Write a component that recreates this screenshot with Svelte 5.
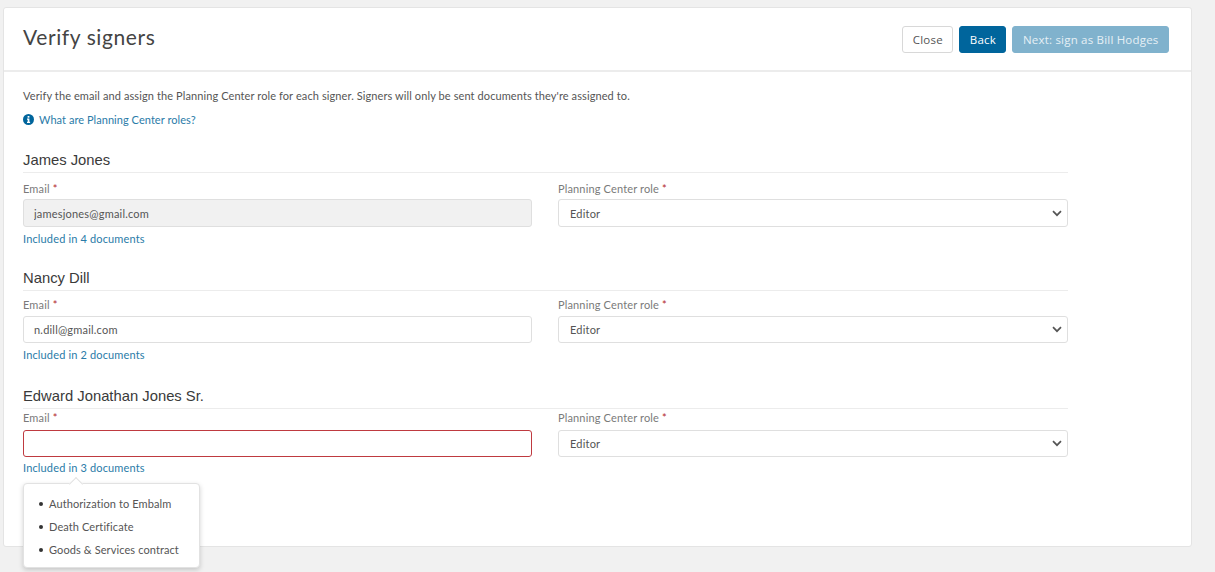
<script>
  const signers = [
    { name: 'James Jones', email: 'jamesjones@gmail.com', docs: 4, state: 'readonly' },
    { name: 'Nancy Dill', email: 'n.dill@gmail.com', docs: 2, state: 'ok' },
    { name: 'Edward Jonathan Jones Sr.', email: '', docs: 3, state: 'error', open: true }
  ];
  const openDocs = ['Authorization to Embalm', 'Death Certificate', 'Goods & Services contract'];
</script>

<div class="page">
  <div class="card">
    <header class="header">
      <h1>Verify signers</h1>
      <div class="actions">
        <button class="btn">Close</button>
        <button class="btn primary">Back</button>
        <button class="btn primary disabled">Next: sign as Bill Hodges</button>
      </div>
    </header>

    <div class="body">
      <p class="intro">Verify the email and assign the Planning Center role for each signer. Signers will only be sent documents they're assigned to.</p>
      <a class="help" href="#roles">
        <svg width="11" height="11" viewBox="0 0 11 11">
          <circle cx="5.5" cy="5.5" r="5.5" fill="#00659c" />
          <rect x="4.6" y="2" width="1.8" height="1.7" fill="#fff" />
          <path d="M4 4.6h2.4v3.2h.7v1.1H4V7.8h.7V5.7H4z" fill="#fff" />
        </svg>
        What are Planning Center roles?
      </a>

      {#each signers as s}
        <section class="signer {s.state}">
          <h2>{s.name}</h2>
          <div class="fields">
            <div class="field">
              <span class="label">Email <i>*</i></span>
              <input class="control" class:locked={s.state === 'readonly'} class:invalid={s.state === 'error'} value={s.email} readonly={s.state === 'readonly'} />
              <div class="docs">
                <a href="#docs">Included in {s.docs} documents</a>
                {#if s.open}
                  <div class="popover">
                    <ul>
                      {#each openDocs as d}
                        <li>{d}</li>
                      {/each}
                    </ul>
                  </div>
                {/if}
              </div>
            </div>
            <div class="field">
              <span class="label">Planning Center role <i>*</i></span>
              <div class="control select">
                Editor
                <svg width="10" height="7" viewBox="0 0 10 7"><path d="M1 1.2l4 4 4-4" fill="none" stroke="#555" stroke-width="1.7" /></svg>
              </div>
            </div>
          </div>
        </section>
      {/each}
    </div>
  </div>
</div>

<style>
  :global(body) {
    margin: 0;
    background: #f1f1f1;
  }
  .page {
    height: 572px;
    box-sizing: border-box;
    padding: 7px 23px 0 3px;
    overflow: hidden;
    font-family: Lato, "Open Sans", sans-serif;
    color: #555;
  }
  .card {
    height: 540px;
    box-sizing: border-box;
    background: #fff;
    border: 1px solid #e4e4e4;
    border-radius: 3px;
  }
  .header {
    display: flex;
    justify-content: space-between;
    align-items: center;
    height: 64px;
    box-sizing: border-box;
    padding: 0 22px 0 19px;
    border-bottom: 2px solid #ececec;
  }
  h1 {
    margin: 0 0 5px;
    font-size: 21px;
    font-weight: 400;
    letter-spacing: 0.6px;
    color: #444;
  }
  .actions {
    display: flex;
    gap: 6px;
  }
  .btn {
    height: 27px;
    padding: 0 9.5px;
    border: 1px solid #d8d8d8;
    border-radius: 3px;
    background: #fff;
    color: #555;
    font-family: "Open Sans", sans-serif;
    font-size: 11.5px;
    letter-spacing: 0.2px;
  }
  .primary {
    background: #00659c;
    border-color: #00659c;
    color: #fff;
  }
  .disabled {
    background: #80b2cd;
    border-color: #80b2cd;
    color: #e6f0f5;
  }
  .body {
    padding: 0 123px 0 19px;
  }
  .intro {
    margin: 17px 0 0;
    font-size: 11px;
    line-height: 13px;
    letter-spacing: 0.1px;
  }
  .help {
    display: flex;
    align-items: center;
    gap: 5px;
    margin-top: 11px;
    font-size: 11px;
    line-height: 13px;
    letter-spacing: 0.05px;
    color: #2a7ba8;
    text-decoration: none;
  }
  .signer {
    margin-top: 26px;
  }
  .signer.ok {
    margin-top: 25px;
  }
  .signer.error {
    margin-top: 27px;
  }
  h2 {
    margin: 0;
    padding-bottom: 3px;
    border-bottom: 1px solid #ececec;
    font-family: "Liberation Sans", sans-serif;
    font-size: 14.8px;
    line-height: 17px;
    font-weight: 400;
    color: #3a3a3a;
  }
  .fields {
    display: grid;
    grid-template-columns: 509px 510px;
    column-gap: 26px;
    margin-top: 9px;
  }
  .ok .fields {
    margin-top: 7px;
  }
  .error .fields {
    margin-top: 2px;
  }
  .label {
    display: block;
    font-size: 11px;
    line-height: 13px;
    letter-spacing: 0.15px;
    color: #7a7a7a;
  }
  .label i {
    font-style: normal;
    color: #b3262c;
  }
  .control {
    display: block;
    width: 100%;
    height: 28px;
    margin-top: 4px;
    box-sizing: border-box;
    padding: 0 10px;
    border: 1px solid #dfdfdf;
    border-radius: 3px;
    background: #fff;
    font-family: Lato, sans-serif;
    font-size: 11px;
    letter-spacing: 0.2px;
    color: #555;
    outline: none;
  }
  .ok .control {
    height: 27px;
    margin-top: 5px;
  }
  .error .control {
    height: 27px;
    margin-top: 6px;
  }
  .locked {
    background: #f1f1f1;
  }
  .error .invalid {
    border-color: #bf3a40;
  }
  .select {
    display: flex;
    align-items: center;
    justify-content: space-between;
    padding: 0 5px 0 11px;
  }
  .docs {
    position: relative;
    margin-top: 5px;
    font-size: 11px;
    line-height: 13px;
    letter-spacing: 0.15px;
  }
  .error .docs {
    margin-top: 4px;
  }
  .docs a {
    color: #2a7ba8;
    text-decoration: none;
  }
  .popover {
    position: absolute;
    top: 22px;
    left: 0;
    width: 177px;
    height: 85px;
    box-sizing: border-box;
    border: 1px solid #e2e2e2;
    border-radius: 4px;
    background: #fff;
    box-shadow: 0 2px 5px rgba(0, 0, 0, 0.18);
  }
  .popover::before {
    content: '';
    position: absolute;
    top: -5px;
    left: 47px;
    width: 9px;
    height: 9px;
    background: #fff;
    border-top: 1px solid #e2e2e2;
    border-left: 1px solid #e2e2e2;
    transform: rotate(45deg);
  }
  ul {
    margin: 0;
    padding: 8px 0 0 15px;
    list-style: none;
    color: #555;
  }
  li {
    display: flex;
    align-items: center;
    gap: 6px;
    line-height: 23px;
    font-size: 11px;
    letter-spacing: 0.1px;
  }
  li::before {
    content: '';
    width: 4px;
    height: 4px;
    border-radius: 50%;
    background: #333;
  }
</style>
